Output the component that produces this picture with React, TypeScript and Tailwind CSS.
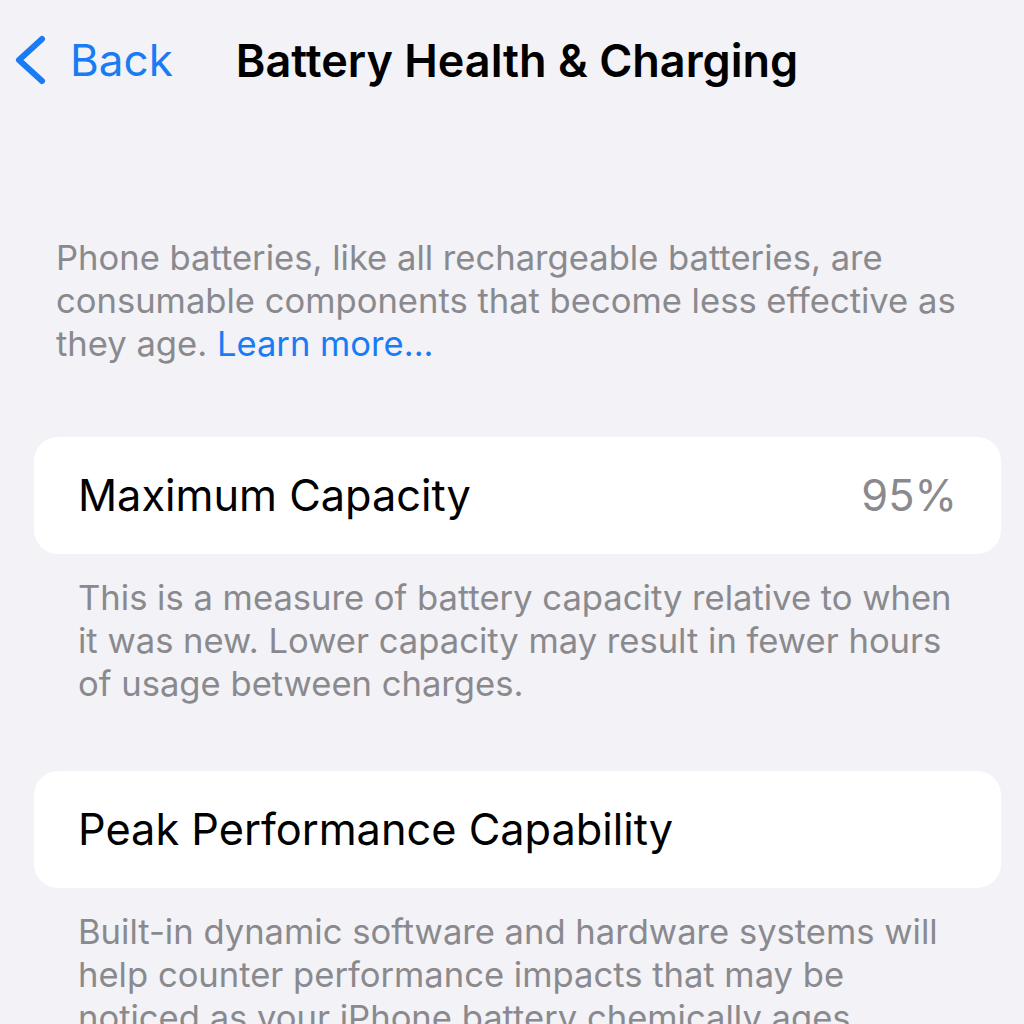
import React from "react";

export default function App() {
  return (
    <div className="w-[1024px] h-[1024px] overflow-hidden bg-[#f2f2f7]" style={{ fontFamily: "Inter, 'Noto Sans', sans-serif" }}>
      <div className="grid grid-cols-[1fr_auto_1fr] items-center h-[124px] pb-[4px]">
        <div className="flex items-center pl-[12px] gap-[24px] text-[#1a7cf5]">
          <svg width="34" height="50" viewBox="0 0 34 50" fill="none">
            <path d="M30 4 L7 25 L30 46" stroke="#1a7cf5" strokeWidth="6" strokeLinecap="round" strokeLinejoin="round" />
          </svg>
          <span className="text-[44px] leading-none">Back</span>
        </div>
        <div className="text-[45px] font-semibold text-black leading-none pl-[10px]">Battery Health &amp; Charging</div>
        <div />
      </div>
      <div className="pl-[56px] pr-[50px] pt-[112px] text-[34.6px] leading-[43px] text-[#8a8a8e]">
        Phone batteries, like all rechargeable batteries, are consumable components that become less effective as they age. <span className="text-[#1a7cf5]">Learn more...</span>
      </div>
      <div className="ml-[34px] mr-[23px] mt-[72px] bg-white rounded-[24px] h-[117px] flex items-center justify-between px-[44px]">
        <span className="text-[43.3px] text-black">Maximum Capacity</span>
        <span className="text-[43.3px] text-[#8a8a8e]">95%</span>
      </div>
      <div className="pl-[78px] pr-[58px] pt-[22px] text-[34.6px] leading-[43px] text-[#8a8a8e]">
        This is a measure of battery capacity relative to when it was new. Lower capacity may result in fewer hours of usage between charges.
      </div>
      <div className="ml-[34px] mr-[23px] mt-[66px] bg-white rounded-[24px] h-[117px] flex items-center px-[44px]">
        <span className="text-[43.3px] text-black">Peak Performance Capability</span>
      </div>
      <div className="pl-[78px] pr-[58px] pt-[22px] text-[34.6px] leading-[43px] text-[#8a8a8e]">
        Built-in dynamic software and hardware systems will help counter performance impacts that may be noticed as your iPhone battery chemically ages.
      </div>
    </div>
  );
}
